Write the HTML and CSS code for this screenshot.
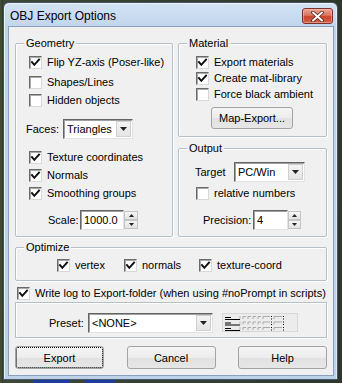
FILE: index.html
```html
<!DOCTYPE html>
<html>
<head>
<meta charset="utf-8">
<link rel="stylesheet" href="styles.css">
</head>
<body>
<div class="desktop">
  <div class="window">
    <div class="titlebar">
      <span class="title">OBJ Export Options</span>
      <span class="close"><svg width="15" height="11" viewBox="0 0 15 11"><path d="M3 1.5 L12 9.5 M12 1.5 L3 9.5" stroke="#5a1f18" stroke-width="3.6" stroke-linecap="round"/><path d="M3 1.5 L12 9.5 M12 1.5 L3 9.5" stroke="#fff" stroke-width="2" stroke-linecap="round"/></svg></span>
    </div>
    <div class="client">
      <div class="top">
        <fieldset class="group geometry">
          <legend>Geometry</legend>
          <label class="cb g-flip"><span class="box"><svg class="tick" viewBox="0 0 11 11"><path d="M2 5.2 L4.3 7.8 L9 2.6"/></svg></span>Flip YZ-axis (Poser-like)</label>
          <label class="cb g-shapes"><span class="box"></span>Shapes/Lines</label>
          <label class="cb g-hidden"><span class="box"></span>Hidden objects</label>
          <div class="field g-faces"><span class="lbl faces-lbl">Faces:</span><span class="select faces-sel"><span class="val">Triangles</span><span class="drop"><svg viewBox="0 0 7 4" width="7" height="4"><path d="M0 0 H7 L3.5 4 Z"/></svg></span></span></div>
          <label class="cb g-tex"><span class="box"><svg class="tick" viewBox="0 0 11 11"><path d="M2 5.2 L4.3 7.8 L9 2.6"/></svg></span>Texture coordinates</label>
          <label class="cb g-norm"><span class="box"><svg class="tick" viewBox="0 0 11 11"><path d="M2 5.2 L4.3 7.8 L9 2.6"/></svg></span>Normals</label>
          <label class="cb g-smooth"><span class="box"><svg class="tick" viewBox="0 0 11 11"><path d="M2 5.2 L4.3 7.8 L9 2.6"/></svg></span>Smoothing groups</label>
          <div class="field g-scale"><span class="lbl scale-lbl">Scale:</span><span class="input scale-in">1000.0</span><span class="spin"><span class="up"><svg viewBox="0 0 5 3" width="5" height="3"><path d="M0 3 H5 L2.5 0 Z"/></svg></span><span class="dn"><svg viewBox="0 0 5 3" width="5" height="3"><path d="M0 0 H5 L2.5 3 Z"/></svg></span></span></div>
        </fieldset>
        <div class="rightcol">
          <fieldset class="group material">
            <legend>Material</legend>
            <label class="cb m-exp"><span class="box"><svg class="tick" viewBox="0 0 11 11"><path d="M2 5.2 L4.3 7.8 L9 2.6"/></svg></span>Export materials</label>
            <label class="cb m-row"><span class="box"><svg class="tick" viewBox="0 0 11 11"><path d="M2 5.2 L4.3 7.8 L9 2.6"/></svg></span>Create mat-library</label>
            <label class="cb m-row"><span class="box"></span>Force black ambient</label>
            <button class="btn mapbtn">Map-Export...</button>
          </fieldset>
          <fieldset class="group output">
            <legend>Output</legend>
            <div class="field o-target"><span class="lbl target-lbl">Target</span><span class="select target-sel"><span class="val">PC/Win</span><span class="drop"><svg viewBox="0 0 7 4" width="7" height="4"><path d="M0 0 H7 L3.5 4 Z"/></svg></span></span></div>
            <label class="cb o-rel"><span class="box"></span>relative numbers</label>
            <div class="field o-prec"><span class="lbl prec-lbl">Precision:</span><span class="input prec-in">4</span><span class="spin"><span class="up"><svg viewBox="0 0 5 3" width="5" height="3"><path d="M0 3 H5 L2.5 0 Z"/></svg></span><span class="dn"><svg viewBox="0 0 5 3" width="5" height="3"><path d="M0 0 H5 L2.5 3 Z"/></svg></span></span></div>
          </fieldset>
        </div>
      </div>
      <fieldset class="group optimize">
        <legend>Optimize</legend>
        <div class="opt-row">
          <label class="cb opt-vertex"><span class="box"><svg class="tick" viewBox="0 0 11 11"><path d="M2 5.2 L4.3 7.8 L9 2.6"/></svg></span>vertex</label>
          <label class="cb opt-normals"><span class="box"><svg class="tick" viewBox="0 0 11 11"><path d="M2 5.2 L4.3 7.8 L9 2.6"/></svg></span>normals</label>
          <label class="cb"><span class="box"><svg class="tick" viewBox="0 0 11 11"><path d="M2 5.2 L4.3 7.8 L9 2.6"/></svg></span>texture-coord</label>
        </div>
      </fieldset>
      <label class="cb writelog"><span class="box"><svg class="tick" viewBox="0 0 11 11"><path d="M2 5.2 L4.3 7.8 L9 2.6"/></svg></span>Write log to Export-folder (when using #noPrompt in scripts)</label>
      <div class="preset">
        <span class="lbl preset-lbl">Preset:</span>
        <span class="select preset-sel"><span class="val">&lt;NONE&gt;</span><span class="drop"><svg viewBox="0 0 7 4" width="7" height="4"><path d="M0 0 H7 L3.5 4 Z"/></svg></span></span>
        <span class="preset-icon"><svg width="76" height="19" viewBox="0 0 76 19">
          <g fill="none" stroke-width="1">
            <g class="r" transform="translate(0,2)">
              <path d="M3 2.5 H9" stroke="#000"/><path d="M3 4.5 H18" stroke="#000"/><path d="M18 1 V4" stroke="#bbb"/>
              <path d="M21 4 V1.5 H24 M26 4 V1.5 H29 M31 4 V1.5 H34 M36 4 V1.5 H39 M41 4 V1.5 H48" stroke="#aaa"/>
              <path d="M49.5 1 V2 M49.5 3.5 V4.5" stroke="#000"/><path d="M52 4 V1.5 H60" stroke="#aaa"/><path d="M61.5 1 V2 M61.5 3.5 V4.5" stroke="#000"/>
            </g>
            <g class="r" transform="translate(0,7.5)">
              <path d="M3 2.5 H9" stroke="#000"/><path d="M3 4.5 H18" stroke="#000"/><path d="M18 1 V4" stroke="#bbb"/>
              <path d="M21 4 V1.5 H24 M26 4 V1.5 H29 M31 4 V1.5 H34 M36 4 V1.5 H39 M41 4 V1.5 H48" stroke="#aaa"/>
              <path d="M49.5 1 V2 M49.5 3.5 V4.5" stroke="#000"/><path d="M52 4 V1.5 H60" stroke="#aaa"/><path d="M61.5 1 V2 M61.5 3.5 V4.5" stroke="#000"/>
            </g>
            <g class="r" transform="translate(0,13)">
              <path d="M3 2.5 H9" stroke="#000"/><path d="M3 4.5 H18" stroke="#000"/><path d="M18 1 V4" stroke="#bbb"/>
              <path d="M21 4 V1.5 H24 M26 4 V1.5 H29 M31 4 V1.5 H34 M36 4 V1.5 H39 M41 4 V1.5 H48" stroke="#aaa"/>
              <path d="M49.5 1 V2 M49.5 3.5 V4.5" stroke="#000"/><path d="M52 4 V1.5 H60" stroke="#aaa"/><path d="M61.5 1 V2 M61.5 3.5 V4.5" stroke="#000"/>
            </g>
          </g>
        </svg></span>
      </div>
      <div class="buttons">
        <button class="btn dlg focused">Export</button>
        <button class="btn dlg">Cancel</button>
        <button class="btn dlg">Help</button>
      </div>
    </div>
  </div>
  <div class="taskbits"><span class="bit b1"></span><span class="bit b2"></span></div>
</div>
</body>
</html>
```

FILE: styles.css
```css
* { box-sizing: border-box; }
html, body { margin: 0; padding: 0; }
body { font-family: "Liberation Sans", Arial, sans-serif; font-size: 11px; color: #000; }

.desktop {
  width: 342px;
  height: 383px;
  overflow: hidden;
  padding: 2px 0 0 3px;
  background: linear-gradient(90deg, #2d3629 0, #59624f 1px, #263020 2px, #3d4838 3px, #2f372b 100%);
}

.window {
  width: 335px;
  height: 378px;
  border: 1px solid #46566a;
  border-radius: 6px 6px 0 0;
  background: linear-gradient(#d3e3f4 0, #c0d5ec 24px, #bcd2ea 100%);
  padding: 0 4px 4px 5px;
  box-shadow: inset 1px 1px 0 rgba(255,255,255,0.6), inset -1px 0 0 rgba(255,255,255,0.5);
}

.titlebar {
  height: 24px;
  display: flex;
  justify-content: space-between;
  align-items: flex-start;
  padding-right: 0;
}
.title {
  font-size: 12px;
  line-height: 14px;
  margin-top: 6px;
  margin-left: 1px;
  color: #000;
}
.close {
  width: 31px;
  height: 16px;
  margin-top: 5px;
  border: 1px solid #7b3127;
  border-radius: 3px;
  background: linear-gradient(#e9a796 0, #d9765f 45%, #c7452c 55%, #d4634b 100%);
  display: flex;
  align-items: center;
  justify-content: center;
  box-shadow: inset 0 0 0 1px rgba(255,200,190,0.45);
}

.client {
  width: 324px;
  height: 348px;
  background: #f0f0f0;
  padding: 10px 6px 0 6px;
  box-shadow: 0 0 0 1px #8aa1bd;
}

.top {
  display: grid;
  grid-template-columns: 158px 149px;
  column-gap: 5px;
}
.rightcol {
  display: flex;
  flex-direction: column;
  gap: 5px;
}

.group {
  margin: 0;
  padding: 0 0 6px 0;
  min-width: 0;
  border: 1px solid #d5dfe5;
  border-color: #b5bfc5;
  border-radius: 2px;
  box-shadow: inset 1px 1px 0 #fff, 1px 1px 0 #fff;
}
.group legend {
  margin-left: 8px;
  padding: 0 2px;
  line-height: 13px;
  font-size: 11px;
  background: #f0f0f0;
}
.material { padding-bottom: 7px; }
.output { flex: 1; }

.cb {
  display: flex;
  align-items: center;
  height: 16px;
  white-space: nowrap;
  gap: 5px;
}
.box {
  width: 13px;
  height: 13px;
  flex: none;
  background: #fff;
  border: 1px solid;
  border-color: #6a6a6a #d8d8d8 #d8d8d8 #6a6a6a;
  box-shadow: inset 1px 1px 0 #a9a9a9;
  display: flex;
  align-items: center;
  justify-content: center;
}
.tick { width: 11px; height: 11px; }
.tick path { fill: none; stroke: #111; stroke-width: 2; stroke-linecap: square; }

.geometry .cb { margin-left: 13px; height: 18px; }
.g-flip { margin-top: 3px; }
.g-shapes { margin-top: 2px; }
.g-tex { margin-top: 9px; }

.field { display: flex; align-items: center; height: 20px; }
.g-faces { margin-top: 10px; margin-left: 10px; }
.faces-lbl { width: 37px; }
.faces-sel { width: 70px; }
.g-scale { margin-top: 8px; margin-left: 32px; }
.scale-lbl { width: 32px; }
.scale-in { width: 44px; }

.select {
  height: 20px;
  display: flex;
  background: #fff;
  border: 1px solid;
  border-color: #646464 #e3e3e3 #e3e3e3 #646464;
  box-shadow: inset 1px 1px 0 #a0a0a0;
}
.select .val { flex: 1; padding-left: 3px; line-height: 18px; overflow: hidden; white-space: nowrap; }
.drop {
  width: 15px;
  margin: 1px 1px 1px 0;
  background: linear-gradient(#f4f4f4, #e4e4e4);
  border: 1px solid #d0d0d0;
  display: flex;
  align-items: center;
  justify-content: center;
}
.drop svg path, .spin svg path { fill: #222; }

.input {
  height: 20px;
  background: #fff;
  border: 1px solid;
  border-color: #646464 #e3e3e3 #e3e3e3 #646464;
  box-shadow: inset 1px 1px 0 #a0a0a0;
  padding-left: 3px;
  line-height: 18px;
  overflow: hidden;
  white-space: nowrap;
}
.spin {
  width: 14px;
  height: 20px;
  display: flex;
  flex-direction: column;
  padding: 1px 0;
  background: #f0f0f0;
}
.spin span {
  flex: 1;
  display: flex;
  align-items: center;
  justify-content: center;
  background: linear-gradient(#f6f6f6, #e2e2e2);
  border: 1px solid #c4c4c4;
}

.material .cb { margin-left: 17px; }
.m-exp { margin-top: 4px; }
.btn {
  font-family: "Liberation Sans", Arial, sans-serif;
  font-size: 11px;
  color: #000;
  border: 1px solid #a3a3a3;
  border-radius: 3px;
  background: linear-gradient(#f5f5f5 0, #ececec 50%, #e1e1e1 51%, #e6e6e6 100%);
  padding: 0;
}
.mapbtn {
  display: block;
  width: 82px;
  height: 22px;
  margin: 5px 0 0 32px;
}

.o-target { margin-top: 7px; margin-left: 16px; }
.target-lbl { width: 39px; }
.target-sel { width: 71px; }
.output .cb { margin-left: 17px; }
.o-rel { margin-top: 3px; }
.o-prec { margin-top: 9px; margin-left: 24px; }
.prec-lbl { width: 50px; }
.prec-in { width: 35px; }
.o-prec .spin { width: 13px; }

.optimize { margin-top: 4px; padding-bottom: 7px; }
.opt-row { display: flex; margin-top: 3px; margin-left: 41px; }
.opt-vertex { width: 67px; }
.opt-normals { width: 75px; }

.writelog { margin-top: 4px; margin-left: 2px; }

.preset {
  margin-top: 1px;
  height: 36px;
  border: 1px solid #b5bfc5;
  box-shadow: inset 1px 1px 0 #fff, 1px 1px 0 #fff;
  display: flex;
  align-items: flex-start;
  padding: 10px 0 0 33px;
}
.preset-lbl { width: 39px; line-height: 20px; }
.preset-sel { width: 125px; }
.preset-icon {
  margin-left: 9px;
  width: 76px;
  height: 19px;
  background: #ececec;
  border: 1px solid #d8d8d8;
  display: flex;
}
.preset-icon svg { margin: -1px; }

.buttons {
  margin-top: 8px;
  display: flex;
  justify-content: space-between;
}
.dlg { width: 89px; height: 23px; }
.focused { outline: 1px dotted #000; outline-offset: -2px; }

.taskbits {
  position: relative;
  height: 3px;
  margin-top: 0;
}
.bit { position: absolute; top: 0; height: 3px; background: #1d3b9e; }
.b1 { left: 30px; width: 37px; }
.b2 { left: 82px; width: 30px; }
```
